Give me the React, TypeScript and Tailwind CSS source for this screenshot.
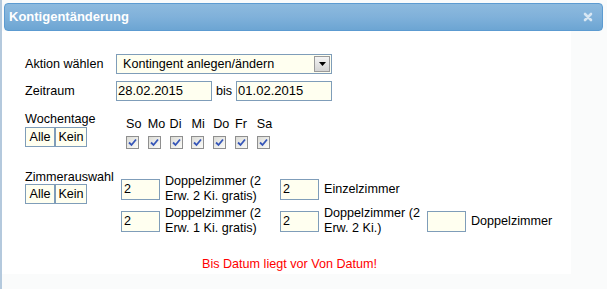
import React from "react";

const days = ["So", "Mo", "Di", "Mi", "Do", "Fr", "Sa"];

function Check() {
  return (
    <div className="w-[13px] h-[13px] border border-[#8f8f8f] bg-gradient-to-br from-[#dcdcd7] to-[#fbfbf8] flex items-center justify-center">
      <svg width="9" height="9" viewBox="0 0 9 9">
        <path d="M1 4.5 L3.5 7 L8 1.5" fill="none" stroke="#3656b8" strokeWidth="1.8" />
      </svg>
    </div>
  );
}

function SmallBtn({ children, w }: { children: React.ReactNode; w: string }) {
  return (
    <div className={`${w} h-[20px] border border-[#7f9db9] bg-[#fffff0] flex items-center justify-center`}>
      {children}
    </div>
  );
}

function Room({ value, label }: { value: string; label: string }) {
  return (
    <div className="flex items-center h-[30px]">
      <div className="w-[39px] h-[21px] border border-[#7f9db9] bg-[#fffff0] pl-[2px] leading-[19px] shrink-0">
        {value}
      </div>
      <div className="ml-[5px] leading-[15px]">{label}</div>
    </div>
  );
}

export default function App() {
  return (
    <div
      className="w-[607px] h-[289px] bg-[#fafbfb] border-l-2 border-[#b4c9dd] pt-[3px] flex flex-col text-[12.6px] text-black overflow-hidden"
      style={{ fontFamily: '"Liberation Sans", Arial, sans-serif' }}
    >
      {/* title bar */}
      <div className="ml-[2px] mr-[4px] h-[28px] rounded-[4px] border border-[#5c9bd1] bg-gradient-to-b from-[#8dbade] via-[#80b1da] to-[#6ca5d3] flex items-center justify-between pl-[4px] pr-[9px]">
        <span className="text-white font-bold text-[13px]">Kontigentänderung</span>
        <svg width="10" height="10" viewBox="0 0 10 10">
          <path d="M2 2 L8 8 M8 2 L2 8" stroke="#d6e6f3" strokeWidth="2.6" strokeLinecap="round" />
        </svg>
      </div>

      {/* content */}
      <div className="w-[569px] h-[243px] bg-white pl-[23px] pt-[23px]">
        <div className="flex items-center h-[20px]">
          <div className="w-[91px]">Aktion wählen</div>
          <div className="w-[216px] h-[20px] border border-[#7f9db9] bg-[#fffff0] flex items-center justify-between pl-[6px] pr-px">
            <span>Kontingent anlegen/ändern</span>
            <div className="w-[16px] h-[16px] border border-[#9a9a9a] bg-gradient-to-b from-[#f4f4f4] to-[#d4d4d4] flex items-center justify-center">
              <svg width="7" height="4" viewBox="0 0 7 4">
                <path d="M0 0 L7 0 L3.5 4 Z" fill="#000" />
              </svg>
            </div>
          </div>
        </div>

        <div className="flex items-center h-[20px] mt-[7px]">
          <div className="w-[91px]">Zeitraum</div>
          <div className="w-[96px] h-[20px] border border-[#7f9db9] bg-[#fffff0] pl-px leading-[18px] text-[13px]">
            28.02.2015
          </div>
          <span className="ml-[4px] mr-[4px]">bis</span>
          <div className="w-[96px] h-[20px] border border-[#7f9db9] bg-[#fffff0] pl-px leading-[18px] text-[13px]">
            01.02.2015
          </div>
        </div>

        <div className="flex mt-[11px]">
          <div className="w-[101px] flex flex-col">
            <div className="leading-[15px]">Wochentage</div>
            <div className="flex">
              <SmallBtn w="w-[30px]">Alle</SmallBtn>
              <SmallBtn w="w-[32px]">Kein</SmallBtn>
            </div>
          </div>
          <div className="flex mt-[5px]">
            {days.map((d) => (
              <div key={d} className="w-[21.8px] flex flex-col">
                <div className="leading-[15px]">{d}</div>
                <div className="mt-[4px]">
                  <Check />
                </div>
              </div>
            ))}
          </div>
        </div>

        <div className="flex mt-[21px]">
          <div className="w-[96px] flex flex-col">
            <div className="leading-[14px] whitespace-nowrap">Zimmerauswahl</div>
            <div className="flex">
              <SmallBtn w="w-[30px]">Alle</SmallBtn>
              <SmallBtn w="w-[32px]">Kein</SmallBtn>
            </div>
          </div>
          <div className="grid grid-cols-[159px_147px_auto] gap-y-[2px] mt-[4px]">
            <Room value="2" label="Doppelzimmer (2 Erw. 2 Ki. gratis)" />
            <Room value="2" label="Einzelzimmer" />
            <div />
            <Room value="2" label="Doppelzimmer (2 Erw. 1 Ki. gratis)" />
            <Room value="2" label="Doppelzimmer (2 Erw. 2 Ki.)" />
            <Room value="" label="Doppelzimmer" />
          </div>
        </div>

        <div className="mt-[19px] ml-[177px] text-[#ff0000]">Bis Datum liegt vor Von Datum!</div>
      </div>
    </div>
  );
}
